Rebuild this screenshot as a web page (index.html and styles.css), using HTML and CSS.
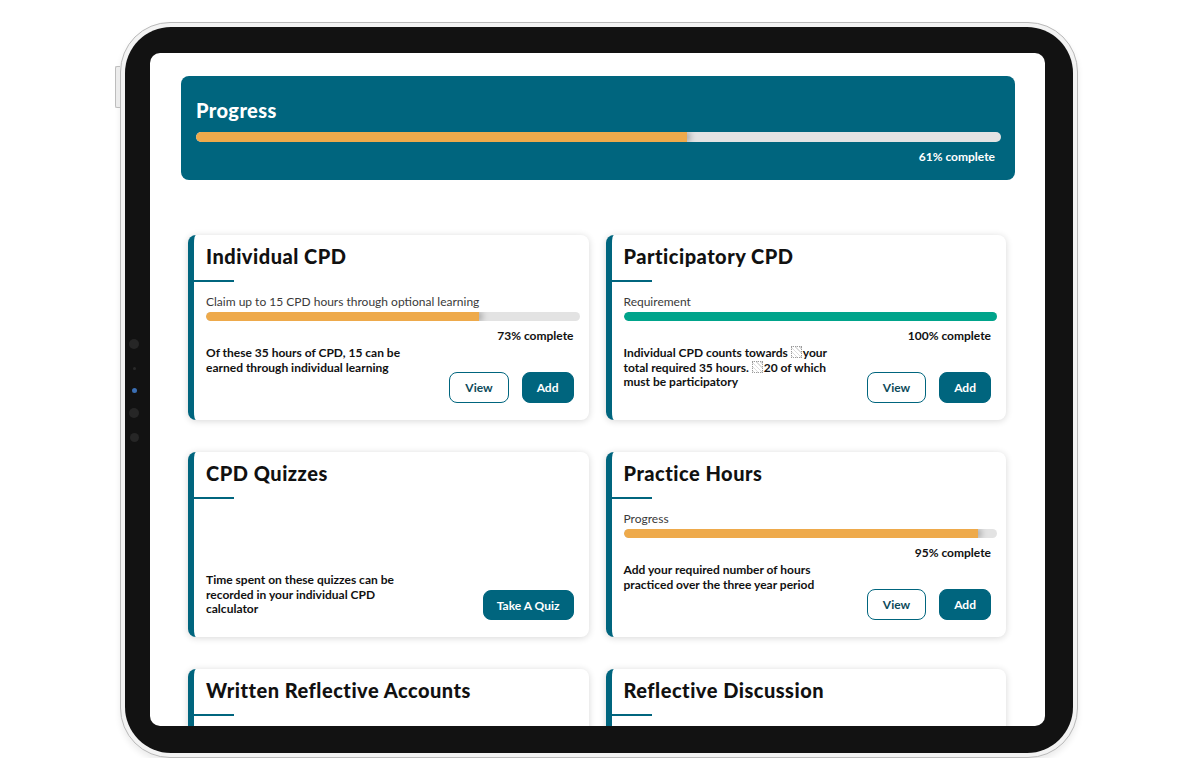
FILE: index.html
```html
<!DOCTYPE html>
<html lang="en">
<head>
  <meta charset="UTF-8">
  <meta name="viewport" content="width=device-width, initial-scale=1.0">
  <title>CPD Dashboard</title>
  <link rel="stylesheet" href="styles.css">
</head>
<body>

<div class="tablet">
  <span class="side-button"></span>
  <div class="bezel">
    <div class="sensors">
      <span class="sensor"></span>
      <span class="sensor tiny"></span>
      <span class="sensor led"></span>
      <span class="sensor"></span>
      <span class="sensor small"></span>
    </div>

    <div class="screen">
      <div class="page">

        <div class="progress-box">
          <h2>Progress</h2>
          <div class="bar"><div class="fill orange" style="width:61%"></div></div>
          <p class="percent">61% complete</p>
        </div>

        <div class="cards">

          <div class="card">
            <h3>Individual CPD</h3>
            <p class="label">Claim up to 15 CPD hours through optional learning</p>
            <div class="bar"><div class="fill orange" style="width:73%"></div></div>
            <p class="percent">73% complete</p>
            <div class="card-foot">
              <p class="desc">Of these 35 hours of CPD, 15 can be earned through individual learning</p>
              <div class="actions">
                <button class="btn outline">View</button>
                <button class="btn">Add</button>
              </div>
            </div>
          </div>

          <div class="card">
            <h3>Participatory CPD</h3>
            <p class="label">Requirement</p>
            <div class="bar"><div class="fill green" style="width:100%"></div></div>
            <p class="percent">100% complete</p>
            <div class="card-foot">
              <p class="desc">Individual CPD counts towards <i class="tofu"></i><span>your</span><br><span>total required 35 hours.</span> <i class="tofu"></i><span>20 of which</span><br><span>must be participatory</span></p>
              <div class="actions">
                <button class="btn outline">View</button>
                <button class="btn">Add</button>
              </div>
            </div>
          </div>

          <div class="card">
            <h3>CPD Quizzes</h3>
            <div class="card-foot bottom">
              <p class="desc">Time spent on these quizzes can be recorded in your individual CPD calculator</p>
              <div class="actions">
                <button class="btn wide">Take A Quiz</button>
              </div>
            </div>
          </div>

          <div class="card">
            <h3>Practice Hours</h3>
            <p class="label">Progress</p>
            <div class="bar"><div class="fill orange" style="width:95%"></div></div>
            <p class="percent">95% complete</p>
            <div class="card-foot">
              <p class="desc">Add your required number of hours practiced over the three year period</p>
              <div class="actions">
                <button class="btn outline">View</button>
                <button class="btn">Add</button>
              </div>
            </div>
          </div>

          <div class="card">
            <h3>Written Reflective Accounts</h3>
          </div>

          <div class="card">
            <h3>Reflective Discussion</h3>
          </div>

        </div>
      </div>
    </div>
  </div>
</div>

</body>
</html>
```

FILE: styles.css
```css
body {
  margin: 0;
  background: #fff;
  font-family: 'Lato', 'Liberation Sans', sans-serif;
  color: #111;
}

/* device frame */
.tablet {
  position: relative;
  width: 948px;
  margin: 22px 0 0 120px;
  padding: 4px;
  border: 1px solid #b9b9b9;
  border-radius: 50px;
  background: #f3f3f3;
  box-shadow: 0 4px 6px rgba(0,0,0,0.08);
}
.side-button {
  position: absolute;
  left: -6px;
  top: 43px;
  width: 4px;
  height: 40px;
  border: 1px solid #bdbdbd;
  border-right: none;
  border-radius: 2px 0 0 2px;
  background: #ececec;
}
.bezel {
  position: relative;
  background: #121212;
  border-radius: 46px;
  padding: 26px 28px 27px 25px;
}
.sensors {
  position: absolute;
  left: 4px;
  top: 312px;
  width: 10px;
  display: flex;
  flex-direction: column;
  align-items: center;
}
.sensor {
  width: 10px;
  height: 10px;
  border-radius: 50%;
  background: #262626;
  margin-bottom: 17.5px;
}
.sensor.tiny {
  width: 3px;
  height: 3px;
  background: #2a2a2a;
  margin-bottom: 18px;
}
.sensor.led {
  width: 5px;
  height: 5px;
  background: #3b6fb4;
  margin-bottom: 15.5px;
}
.sensor + .sensor.led + .sensor {
  margin-bottom: 14.5px;
}
.sensor.small {
  width: 9px;
  height: 9px;
}

.screen {
  height: 673px;
  background: #fff;
  border-radius: 10px;
  overflow: hidden;
}
.page {
  padding: 23px 30px 0 31px;
}

/* progress banner */
.progress-box {
  background: #00657e;
  border-radius: 8px;
  padding: 22px 14px 16px 15px;
  color: #fff;
}
.progress-box h2 {
  margin: 0;
  font-size: 20px;
  line-height: 24px;
  font-weight: 900;
  letter-spacing: 0.4px;
}
.progress-box .bar {
  margin-top: 10px;
  height: 10px;
}
.progress-box .percent {
  margin-top: 7px;
  color: #fff;
}

.bar {
  height: 9px;
  background: #e3e3e3;
  border-radius: 5px;
  overflow: hidden;
}
.fill {
  height: 100%;
  border-radius: 5px 0 0 5px;
}
.fill.orange {
  background: #eeaa4b;
  box-shadow: 3px 0 6px rgba(0,0,0,0.28);
}
.fill.green {
  background: #00a48b;
}
.percent {
  margin: 7px 6px 0 0;
  text-align: right;
  font-size: 12px;
  line-height: 15px;
  font-weight: 700;
}

/* cards */
.cards {
  margin: 55px 9px 0 7px;
  display: grid;
  grid-template-columns: 1fr 1fr;
  column-gap: 17px;
  row-gap: 32px;
}
.card {
  display: flex;
  flex-direction: column;
  min-height: 159px;
  background: #fff;
  border-left: 6px solid #00657e;
  border-radius: 8px;
  padding: 9px 9px 17px 12px;
  box-shadow: 0 1px 7px rgba(0,0,0,0.16);
}
.card h3 {
  margin: 0;
  font-size: 20px;
  line-height: 24px;
  font-weight: 900;
  letter-spacing: 0.5px;
  color: #111;
}
.card h3::after {
  content: '';
  display: block;
  width: 40px;
  height: 2px;
  margin: 12px 0 0 -12px;
  background: #00657e;
}
.label {
  margin: 12px 0 3px;
  font-size: 12px;
  line-height: 15px;
  font-weight: 400;
  color: #3a3a3a;
}
.card-foot {
  display: flex;
  justify-content: space-between;
  align-items: flex-start;
  margin: 3px 6px 0 0;
}
.card-foot.bottom {
  margin-top: auto;
}
.desc {
  margin: 0;
  max-width: 214px;
  font-size: 12px;
  line-height: 14.5px;
  font-weight: 700;
}
.actions {
  display: flex;
  gap: 13px;
  margin-top: 26px;
}
.card-foot.bottom .actions {
  margin-top: 17px;
}
.btn {
  height: 31px;
  padding: 0 14px;
  border: 1px solid #00657e;
  border-radius: 8px;
  background: #00657e;
  color: #fff;
  font-family: inherit;
  font-size: 12px;
  font-weight: 700;
}
.btn.outline {
  background: #fff;
  color: #0d4a5a;
  padding: 0 15px;
}
.btn.wide {
  height: 30px;
  padding: 0 13px;
}
.tofu {
  display: inline-block;
  width: 9px;
  height: 10px;
  margin: 0 1px 0 0;
  border: 1px dotted #9a9a9a;
  vertical-align: -1px;
  background: repeating-linear-gradient(45deg, #ddd 0 1px, #fff 1px 3px);
}
```
